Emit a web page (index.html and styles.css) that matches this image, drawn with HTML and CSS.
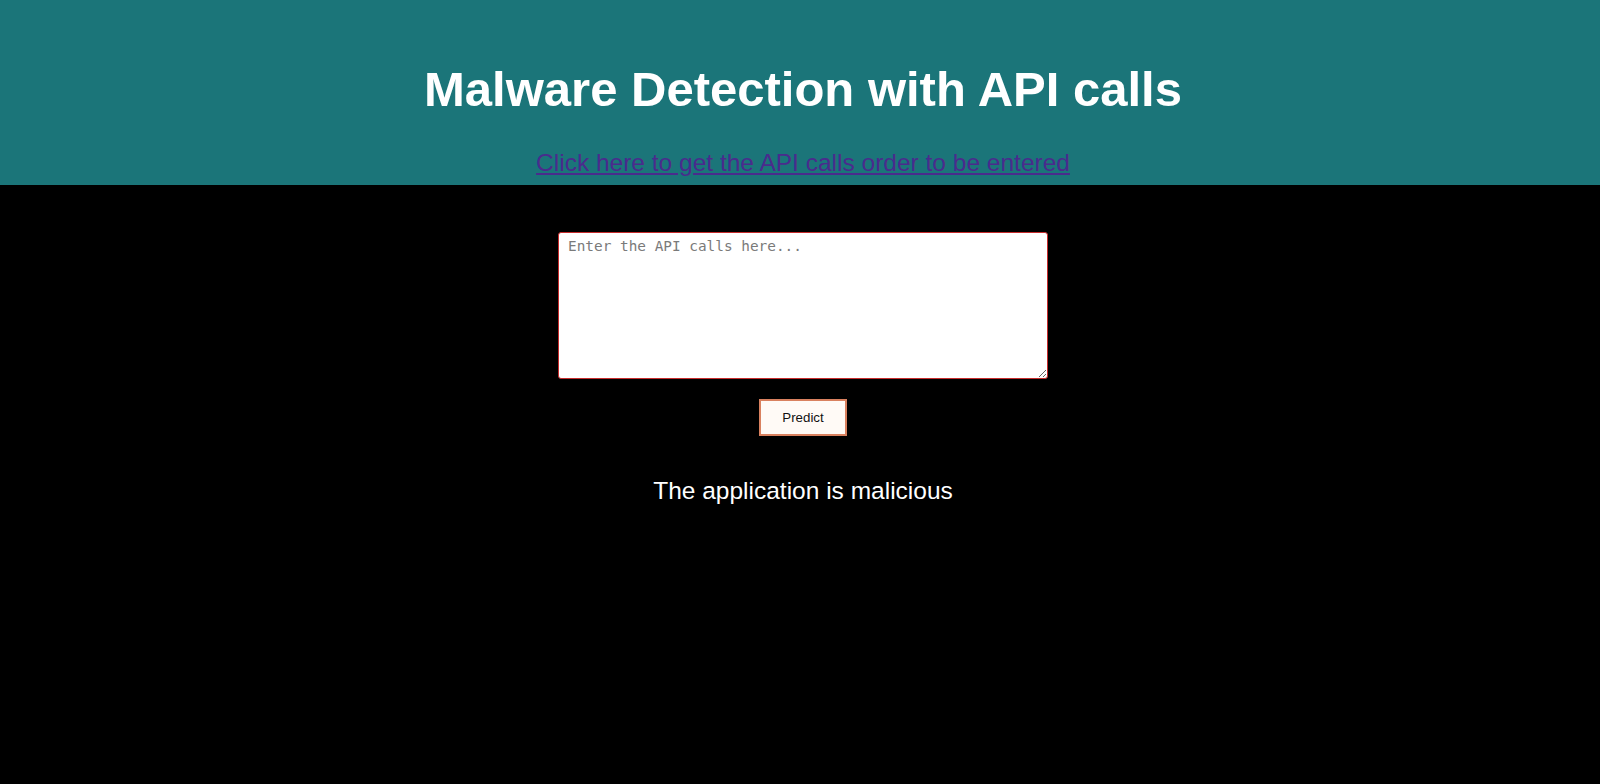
FILE: index.html
```html
<!DOCTYPE html>
<html>
<head>
<meta charset="utf-8">
<title>Malware Detection</title>
<link rel="stylesheet" href="styles.css">
</head>
<body>
<header class="hero">
  <h1 class="title">Malware Detection with API calls</h1>
  <a class="api-link" href="#">Click here to get the API calls order to be entered</a>
</header>
<main class="content">
  <form class="predict-form">
    <textarea class="api-input" placeholder="Enter the API calls here..."></textarea>
    <button class="predict-btn" type="button">Predict</button>
  </form>
  <p class="result">The application is malicious</p>
</main>
</body>
</html>
```
FILE: styles.css
```css
html, body {
  margin: 0;
  padding: 0;
  background: #000;
  height: 100%;
}
body {
  font-family: "Liberation Sans", Arial, sans-serif;
  color: #fff;
}
.hero {
  background: #1b7579;
  height: 185px;
  box-sizing: border-box;
  padding: 1px 0 0 6px;
  text-align: center;
}
.title {
  font-size: 49px;
  font-weight: bold;
  margin: 63px 0 0;
  line-height: 50px;
}
.api-link {
  display: inline-block;
  margin-top: 35px;
  font-size: 24.5px;
  line-height: 28px;
  color: #4a2b8d;
  text-decoration: underline;
}
.content {
  padding-left: 6px;
  display: flex;
  flex-direction: column;
  align-items: center;
}
.predict-form {
  display: flex;
  flex-direction: column;
  align-items: center;
  margin-top: 47px;
}
.api-input {
  width: 490px;
  height: 147px;
  box-sizing: border-box;
  border: 1px solid #c62b2b;
  border-radius: 3px;
  padding: 5px 9px;
  font-family: "DejaVu Sans Mono", monospace;
  font-size: 14.4px;
  background: #fff;
  resize: vertical;
}
.api-input::placeholder {
  color: #7a7a7a;
}
.predict-btn {
  margin-top: 20px;
  width: 88px;
  height: 37px;
  background: #fffaf6;
  border: 2px solid #d9815f;
  font-family: "Liberation Sans", Arial, sans-serif;
  font-size: 13.3px;
  color: #111;
}
.result {
  margin: 41px 0 0;
  font-size: 24.5px;
  line-height: 28px;
}
```
